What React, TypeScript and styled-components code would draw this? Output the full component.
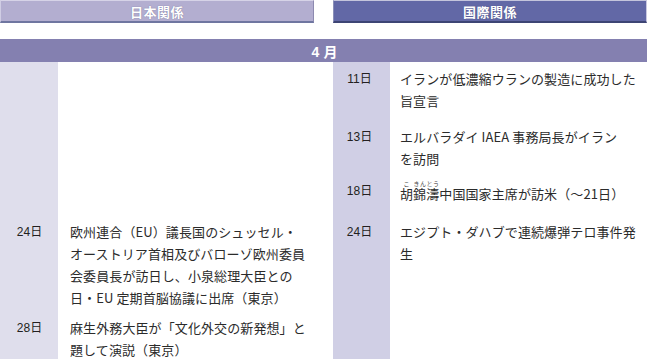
import React, { ReactNode } from 'react';
import styled, { createGlobalStyle } from "styled-components";


const GlobalStyle = createGlobalStyle`
  html, body {
    margin: 0;
    padding: 0;
    background: #fff;
  }

  body {
    font-family: "Noto Sans CJK JP", "Noto Sans", sans-serif;
  }
`;

const Page = styled.div`
  display: flex;
  flex-direction: column;
  width: 647px;
  min-height: 100vh;
`;

const Tabs = styled.div`
  display: flex;
  gap: 19px;
`;

const Tab = styled.div<{ $dark?: boolean }>`
  box-sizing: border-box;
  width: 314px;
  height: 23px;
  display: flex;
  align-items: center;
  justify-content: center;
  background: ${({ $dark }) => ($dark ? "#6268a6" : "#b3aed0")};
  border-top: 1px solid ${({ $dark }) => ($dark ? "#c4c5dc" : "#d6d3e7")};
  border-left: 1px solid ${({ $dark }) => ($dark ? "#8a8fb8" : "#d0cde4")};
  border-right: 1px solid ${({ $dark }) => ($dark ? "#c9c8e0" : "#8d8ab0")};
  border-bottom: 2px solid ${({ $dark }) => ($dark ? "#3d4574" : "#6f76a0")};
  color: #fff;
  font-size: 13px;
  font-weight: 700;
  letter-spacing: 0.5px;
  text-shadow: 0 0 1px rgba(60, 60, 100, 0.6);
`;

const MonthBar = styled.div`
  margin-top: 16px;
  height: 23px;
  display: flex;
  align-items: center;
  justify-content: center;
  background: #8480b0;
  color: #fff;
  font-family: "Liberation Sans", "Noto Sans CJK JP", sans-serif;
  font-size: 14px;
  font-weight: 700;
  letter-spacing: 4px;
  padding-left: 6px;
`;

const Table = styled.div`
  flex: 1;
  display: grid;
  grid-template-columns: 58px 275px 57px 1fr;
  grid-template-rows: auto auto auto auto 1fr;
`;

const DayCell = styled.div<{ $side: "jp" | "intl"; $pad: number }>`
  padding-top: ${({ $pad }) => $pad}px;
  background: ${({ $side }) => ($side === "jp" ? "#dfdeec" : "#d0cfe5")};
  text-align: center;
  font-family: "Liberation Sans", "Noto Sans CJK JP", sans-serif;
  font-size: 12px;
  line-height: 22px;
  color: #231f20;
  padding-left: ${({ $side }) => ($side === "jp" ? "1px" : "0")};
  padding-right: ${({ $side }) => ($side === "jp" ? "0" : "4px")};
`;

const TextCell = styled.div<{ $side: "jp" | "intl"; $pad: number }>`
  padding-top: ${({ $pad }) => $pad}px;
  padding-left: ${({ $side }) => ($side === "jp" ? "12px" : "10px")};
  font-size: 13px;
  line-height: 22px;
  letter-spacing: 0.1px;
  color: #2b2b2b;
  white-space: nowrap;
`;

// furigana over a name
const Ruby = styled.ruby`
  ruby-position: over;

  rt {
    font-size: 6px;
    line-height: 1;
    letter-spacing: 0;
    color: #444;
  }
`;


type Entry = {
    day: string;
    lines: ReactNode[];
};

type Row = {
    pad: number;
    jp?: Entry;
    intl?: Entry;
};

const rows: Row[] = [
    {
        pad: 6,
        intl: {
            day: "11日",
            lines: ["イランが低濃縮ウランの製造に成功した", "旨宣言"],
        },
    },
    {
        pad: 14,
        intl: {
            day: "13日",
            lines: ["エルバラダイ IAEA 事務局長がイラン", "を訪問"],
        },
    },
    {
        pad: 10,
        intl: {
            day: "18日",
            lines: [
                <>
                    <Ruby>胡<rt>こ</rt></Ruby>
                    <Ruby>錦濤<rt>きんとう</rt></Ruby>
                    中国国家主席が訪米（～21日）
                </>,
            ],
        },
    },
    {
        pad: 16,
        jp: {
            day: "24日",
            lines: [
                "欧州連合（EU）議長国のシュッセル・",
                "オーストリア首相及びバローゾ欧州委員",
                "会委員長が訪日し、小泉総理大臣との",
                "日・EU 定期首脳協議に出席（東京）",
            ],
        },
        intl: {
            day: "24日",
            lines: ["エジプト・ダハブで連続爆弾テロ事件発", "生"],
        },
    },
    {
        pad: 8,
        jp: {
            day: "28日",
            lines: ["麻生外務大臣が「文化外交の新発想」と", "題して演説（東京）"],
        },
    },
];


const Lines = ({ lines }: { lines: ReactNode[] }) => (
    <>
        {lines.map((line, i) => (
            <div key={i}>{line}</div>
        ))}
    </>
);

const App = () => {
    return (
        <Page>
            <GlobalStyle />

            <Tabs>
                <Tab>日本関係</Tab>
                <Tab $dark>国際関係</Tab>
            </Tabs>

            <MonthBar>4月</MonthBar>

            <Table>
                {rows.map((row, i) => (
                    <React.Fragment key={i}>
                        <DayCell $side="jp" $pad={row.pad}>
                            {row.jp?.day}
                        </DayCell>
                        <TextCell $side="jp" $pad={row.pad}>
                            {row.jp && <Lines lines={row.jp.lines} />}
                        </TextCell>
                        <DayCell $side="intl" $pad={row.pad}>
                            {row.intl?.day}
                        </DayCell>
                        <TextCell $side="intl" $pad={row.pad}>
                            {row.intl && <Lines lines={row.intl.lines} />}
                        </TextCell>
                    </React.Fragment>
                ))}
            </Table>
        </Page>
    );
};

export default App;
